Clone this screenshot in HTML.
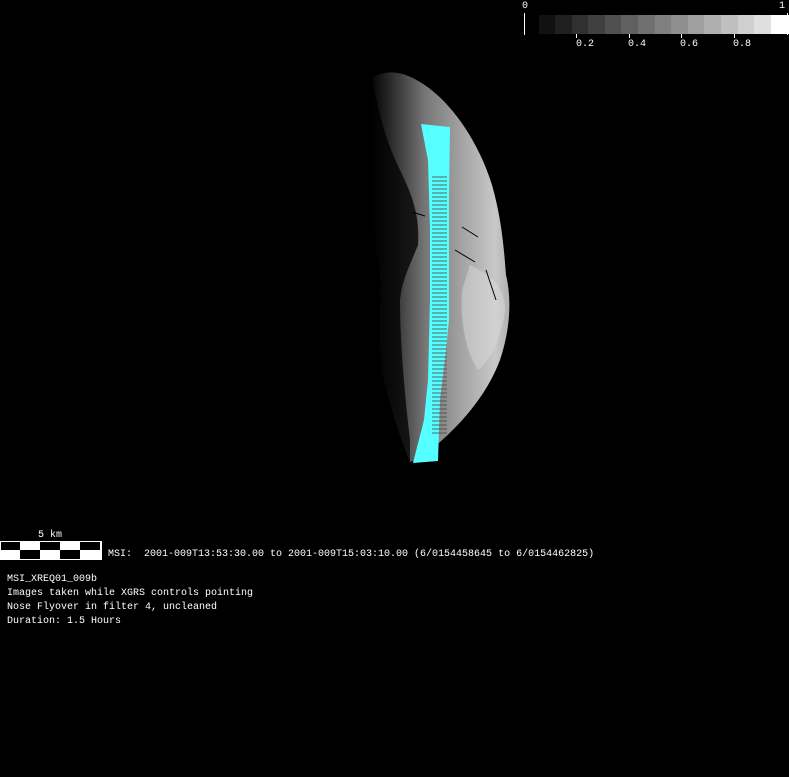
<!DOCTYPE html>
<html><head><meta charset="utf-8"><style>
html,body{margin:0;padding:0;background:#000;width:789px;height:777px;overflow:hidden}
.t{position:absolute;color:#fff;font-family:"Liberation Mono","DejaVu Sans Mono",monospace;font-size:10px;line-height:14px;white-space:pre}
</style></head><body>
<svg width="789" height="777" style="position:absolute;left:0;top:0" xmlns="http://www.w3.org/2000/svg">
<defs>
<linearGradient id="g" x1="0" y1="0" x2="1" y2="0">
<stop offset="0" stop-color="#000"/>
<stop offset="0.15" stop-color="#2a2a2a"/>
<stop offset="0.4" stop-color="#777"/>
<stop offset="0.7" stop-color="#aaa"/>
<stop offset="0.9" stop-color="#c8c8c8"/>
<stop offset="1" stop-color="#b0b0b0"/>
</linearGradient>
<pattern id="p" width="20" height="4" patternUnits="userSpaceOnUse">
<rect width="20" height="2" fill="#444"/>
</pattern>
</defs>
<path fill="url(#g)" d="M372,78 C385,70 400,70 420,82 C450,100 478,140 492,185 C502,220 504,250 506,275 C512,300 510,330 500,360 C488,392 465,420 440,442 C428,452 418,460 410,462 C402,440 390,410 382,370 C378,330 382,300 380,270 C372,240 376,200 372,160 C370,130 368,100 372,78 Z"/>
<path fill="#000" opacity="0.75" d="M372,78 C378,110 385,140 400,170 C412,195 420,215 418,245 C410,265 402,280 400,300 C400,340 404,390 410,440 L410,462 C402,440 390,410 382,370 C378,330 382,300 380,270 C372,240 376,200 372,160 C370,130 368,100 372,78 Z"/>
<path fill="#ddd" opacity="0.45" d="M470,265 C490,275 505,285 505,310 C502,335 492,360 478,370 C465,350 460,320 462,290 Z"/>
<path d="M462,227 L478,237 M455,250 L475,262 M486,270 L496,300 M412,212 L425,216" stroke="#000" stroke-width="1" fill="none"/>
<polygon fill="#55ffff" points="421,124 450,127 449,200 449,320 446,350 440,400 438,461 413,463 424,420 428,380 430,300 430,230 428,160"/>
<rect x="432" y="175" width="15" height="260" fill="url(#p)" opacity="0.4"/>
<g>
<rect x="539" y="15" width="17" height="19" fill="#111"/>
<rect x="555" y="15" width="17" height="19" fill="#202020"/>
<rect x="572" y="15" width="17" height="19" fill="#303030"/>
<rect x="588" y="15" width="17" height="19" fill="#404040"/>
<rect x="605" y="15" width="17" height="19" fill="#505050"/>
<rect x="621" y="15" width="17" height="19" fill="#606060"/>
<rect x="638" y="15" width="17" height="19" fill="#707070"/>
<rect x="655" y="15" width="17" height="19" fill="#808080"/>
<rect x="671" y="15" width="17" height="19" fill="#8f8f8f"/>
<rect x="688" y="15" width="17" height="19" fill="#9f9f9f"/>
<rect x="704" y="15" width="17" height="19" fill="#afafaf"/>
<rect x="721" y="15" width="17" height="19" fill="#bfbfbf"/>
<rect x="738" y="15" width="17" height="19" fill="#cfcfcf"/>
<rect x="754" y="15" width="17" height="19" fill="#dfdfdf"/>
<rect x="771" y="15" width="18" height="19" fill="#fff"/>
<rect x="524" y="13" width="1" height="22" fill="#fff"/>
<rect x="787" y="13" width="1" height="22" fill="#fff"/>
<rect x="576" y="34" width="1" height="4" fill="#fff"/>
<rect x="629" y="34" width="1" height="4" fill="#fff"/>
<rect x="681" y="34" width="1" height="4" fill="#fff"/>
<rect x="734" y="34" width="1" height="4" fill="#fff"/>
</g>
<rect x="0" y="541" width="102" height="19" fill="#fff"/>
<rect x="1" y="542" width="19" height="8" fill="#000"/>
<rect x="40" y="542" width="20" height="8" fill="#000"/>
<rect x="80" y="542" width="20" height="8" fill="#000"/>
<rect x="20" y="550" width="20" height="9" fill="#000"/>
<rect x="60" y="550" width="20" height="9" fill="#000"/>
</svg>
<div class="t" style="left:522px;top:0px">0</div>
<div class="t" style="left:779px;top:0px">1</div>
<div class="t" style="left:576px;top:38px">0.2</div>
<div class="t" style="left:628px;top:38px">0.4</div>
<div class="t" style="left:680px;top:38px">0.6</div>
<div class="t" style="left:733px;top:38px">0.8</div>
<div class="t" style="left:38px;top:529px">5 km</div>
<div class="t" style="left:108px;top:548px">MSI:  2001-009T13:53:30.00 to 2001-009T15:03:10.00 (6/0154458645 to 6/0154462825)</div>
<div class="t" style="left:7px;top:573px">MSI_XREQ01_009b
Images taken while XGRS controls pointing
Nose Flyover in filter 4, uncleaned
Duration: 1.5 Hours</div>
</body></html>
